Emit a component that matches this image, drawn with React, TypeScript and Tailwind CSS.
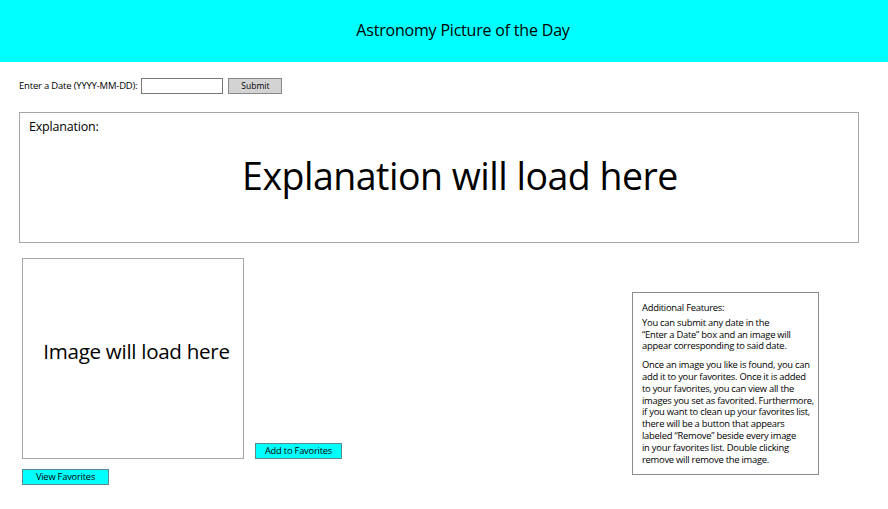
import React from "react";

const font = { fontFamily: '"Open Sans", "Noto Sans", sans-serif' };

export default function App() {
  return (
    <div className="w-[888px] h-[509px] bg-white text-black" style={font}>
      <div className="h-[62px] bg-[#00ffff] flex items-center justify-center pl-[38px] pb-[2px]">
        <h1 className="text-[16px] tracking-[-0.2px]">Astronomy Picture of the Day</h1>
      </div>

      <div className="flex items-center ml-[19px] mt-[16px] h-[16px]">
        <span className="text-[9.5px] tracking-[-0.2px]">Enter a Date (YYYY-MM-DD):</span>
        <input className="ml-[4px] w-[82px] h-[16px] border border-[#777] bg-white" />
        <button className="ml-[5px] w-[54px] h-[16px] bg-[#d3d3d3] border border-[#888] text-[8.5px]">
          Submit
        </button>
      </div>

      <div className="mx-[19px] mt-[18px] w-[840px] h-[131px] border border-[#a6a6a6] relative">
        <div className="pl-[9px] pt-[5px] text-[12.5px] tracking-[-0.2px]">Explanation:</div>
        <div className="text-center text-[37.5px] tracking-[-0.5px] mt-[11px] pl-[42px]">
          Explanation will load here
        </div>
      </div>

      <div className="flex items-start mt-[15px]">
        <div className="ml-[22px]">
          <div className="flex items-end">
            <div className="w-[222px] h-[201px] border border-[#a6a6a6] flex items-center justify-center">
              <span className="text-[20.6px] tracking-[-0.3px] ml-[7px] mt-[-14px]">Image will load here</span>
            </div>
            <button className="ml-[11px] w-[87px] h-[16px] bg-[#00ffff] border border-[#5a8a8a] text-[9.3px] tracking-[-0.2px]">
              Add to Favorites
            </button>
          </div>
          <button className="mt-[10px] w-[87px] h-[16px] bg-[#00ffff] border border-[#5a8a8a] text-[9.3px] tracking-[-0.2px]">
            View Favorites
          </button>
        </div>

        <div className="ml-[290px] mt-[34px] w-[187px] h-[183px] border border-[#8c8c8c] pl-[9px] pt-[9px] text-[9.4px] leading-[11.8px] tracking-[-0.25px] whitespace-nowrap">
          <p>Additional Features:</p>
          <p className="mt-[3px]">
            You can submit any date in the
            <br />
            “Enter a Date” box and an image will
            <br />
            appear corresponding to said date.
          </p>
          <p className="mt-[7px]">
            Once an image you like is found, you can
            <br />
            add it to your favorites. Once it is added
            <br />
            to your favorites, you can view all the
            <br />
            images you set as favorited. Furthermore,
            <br />
            if you want to clean up your favorites list,
            <br />
            there will be a button that appears
            <br />
            labeled “Remove” beside every image
            <br />
            in your favorites list. Double clicking
            <br />
            remove will remove the image.
          </p>
        </div>
      </div>
    </div>
  );
}
